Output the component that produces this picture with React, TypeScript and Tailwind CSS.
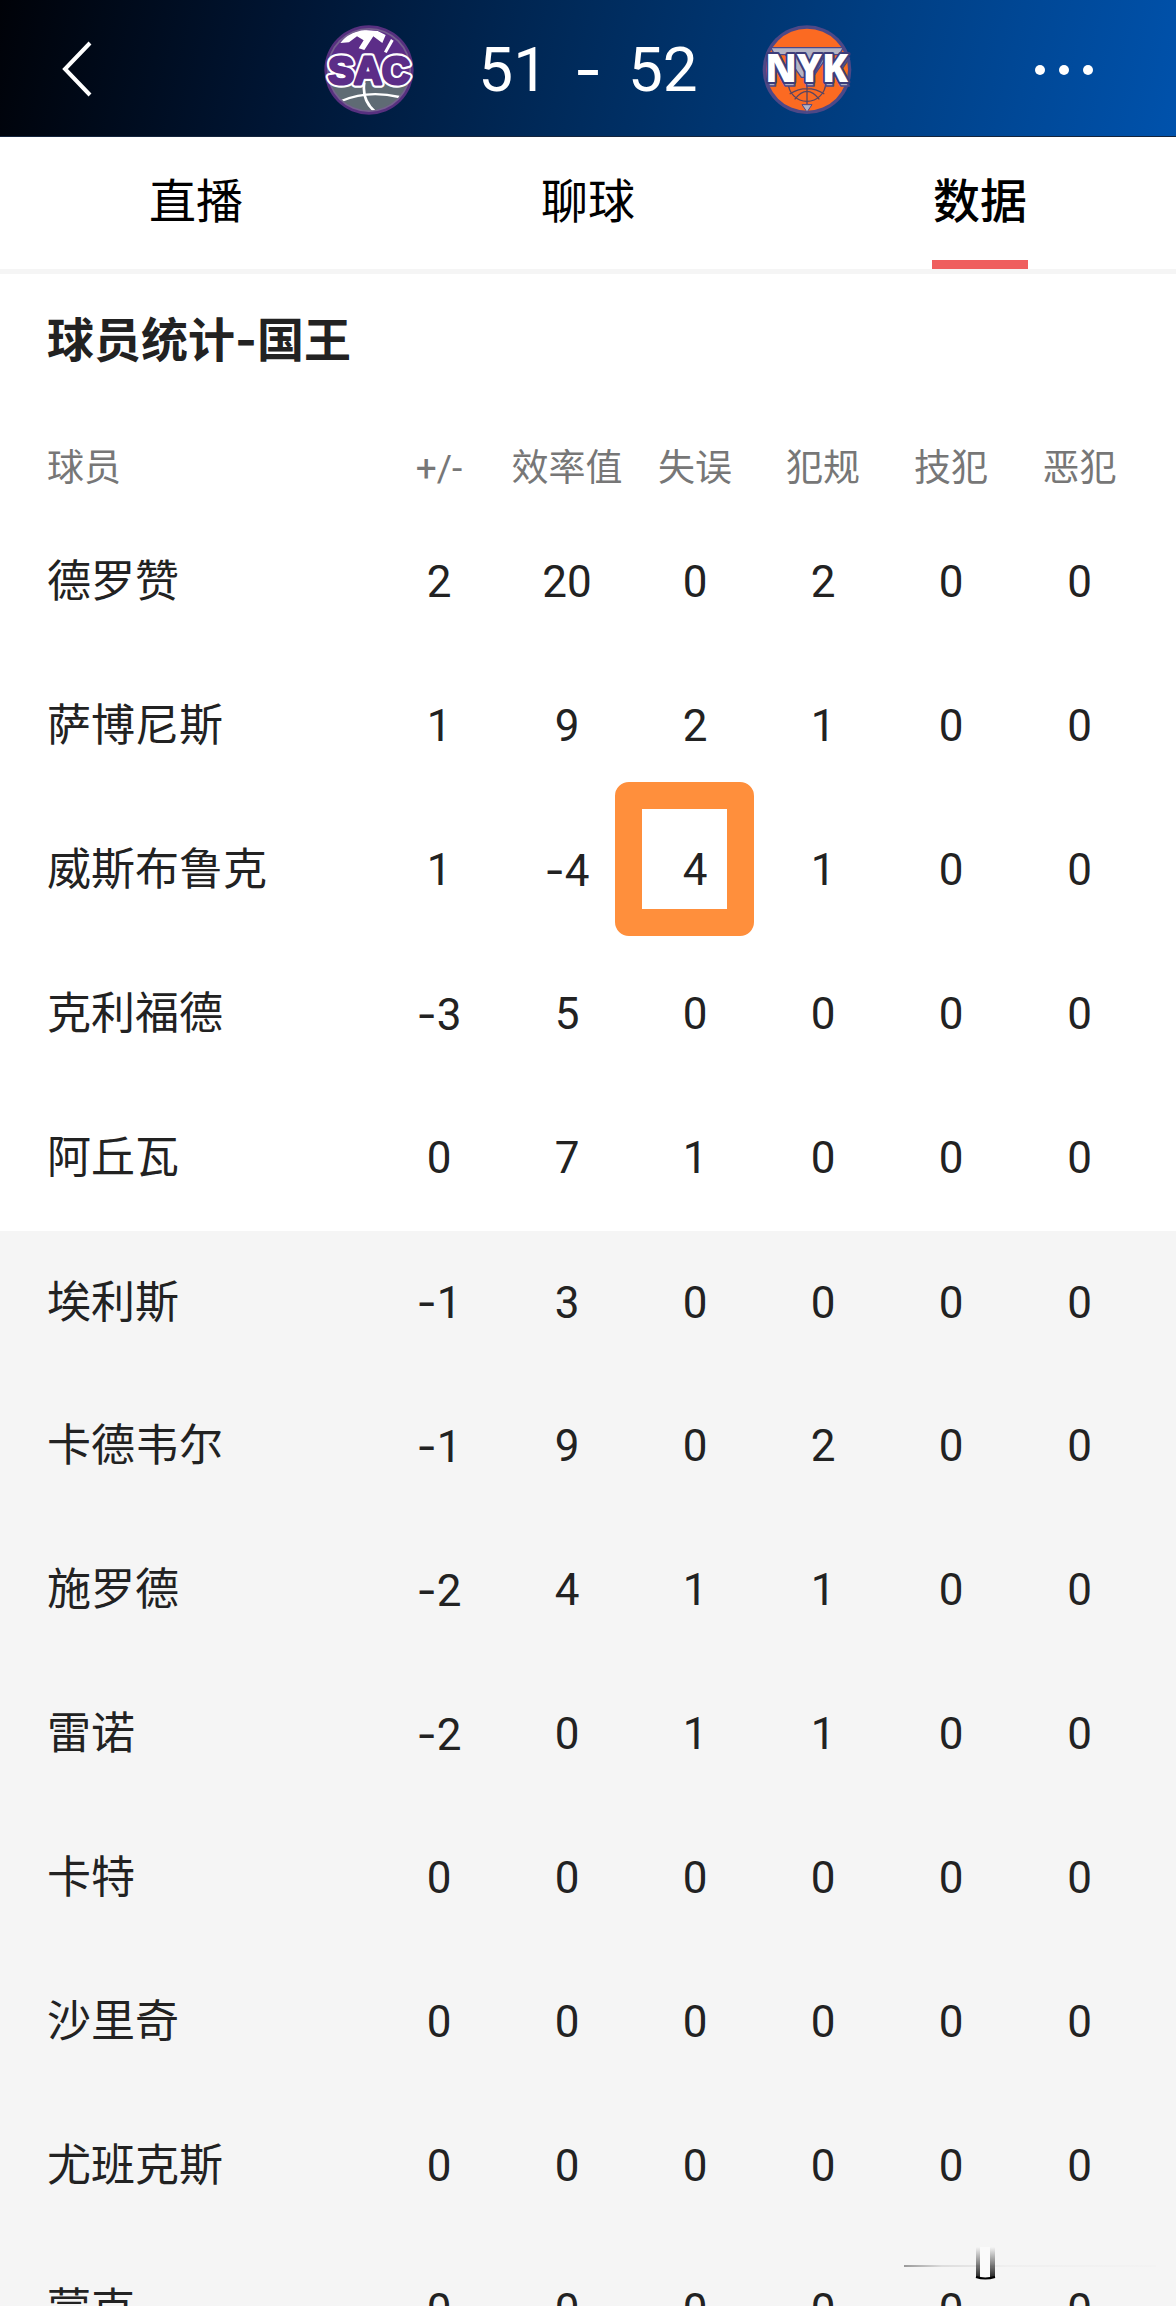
import React from "react";

interface PlayerRow {
  name: string;
  stats: number[];
}

const TABS = ["直播", "聊球", "数据"];
const COLUMNS = ["+/-", "效率值", "失误", "犯规", "技犯", "恶犯"];

const STARTERS: PlayerRow[] = [
  { name: "德罗赞", stats: [2, 20, 0, 2, 0, 0] },
  { name: "萨博尼斯", stats: [1, 9, 2, 1, 0, 0] },
  { name: "威斯布鲁克", stats: [1, -4, 4, 1, 0, 0] },
  { name: "克利福德", stats: [-3, 5, 0, 0, 0, 0] },
  { name: "阿丘瓦", stats: [0, 7, 1, 0, 0, 0] },
];

const BENCH: PlayerRow[] = [
  { name: "埃利斯", stats: [-1, 3, 0, 0, 0, 0] },
  { name: "卡德韦尔", stats: [-1, 9, 0, 2, 0, 0] },
  { name: "施罗德", stats: [-2, 4, 1, 1, 0, 0] },
  { name: "雷诺", stats: [-2, 0, 1, 1, 0, 0] },
  { name: "卡特", stats: [0, 0, 0, 0, 0, 0] },
  { name: "沙里奇", stats: [0, 0, 0, 0, 0, 0] },
  { name: "尤班克斯", stats: [0, 0, 0, 0, 0, 0] },
  { name: "蒙克", stats: [0, 0, 0, 0, 0, 0] },
];

const SacLogo: React.FC = () => (
  <svg viewBox="39 32 270 270" className="size-[90px] shrink-0" role="img" aria-label="SAC">
    <defs>
      <clipPath id="sac-ball">
        <circle cx="174" cy="167" r="121" />
      </clipPath>
    </defs>
    <circle cx="174" cy="167" r="134" fill="#57307f" />
    <circle cx="174" cy="167" r="126" fill="#75608f" />
    <g clipPath="url(#sac-ball)">
      <rect x="40" y="30" width="270" height="180" fill="#5c2d88" />
      <path d="M88 86L108 62L150 46L200 50L224 62L214 86L187 66L160 107L143 102L158 78L138 66L114 84Z" fill="#fff" />
      <path d="M240 74L248 79L227 116L219 112Z" fill="#fff" />
      <rect x="40" y="200" width="270" height="110" fill="#5f6b74" />
      <path d="M91 260Q170 226 265 248" fill="none" stroke="#fff" strokeWidth="7" />
      <path d="M160 205Q152 258 192 292" fill="none" stroke="#fff" strokeWidth="8" />
    </g>
    <g
      fontFamily="'Liberation Sans', Arial, sans-serif"
      fontWeight="700"
      fontSize="116"
      textAnchor="middle"
      strokeLinejoin="round"
    >
      <text x="174" y="209" fill="#fff" stroke="#fff" strokeWidth="22">SAC</text>
      <text x="174" y="209" fill="#5c2d88" stroke="#5c2d88" strokeWidth="9" aria-hidden="true">SAC</text>
    </g>
  </svg>
);

const NykLogo: React.FC = () => (
  <svg viewBox="52 33 270 270" className="size-[90px] shrink-0" role="img" aria-label="NYK">
    <circle cx="187" cy="167" r="133" fill="#4d4887" />
    <circle cx="187" cy="167" r="123" fill="#fb6a22" />
    <path d="M78 101H296L284 122H252L204 190H170L122 122H90Z" fill="#b3b4c4" stroke="#4d4887" strokeWidth="4" />
    <g fill="none" stroke="#5a4560" strokeWidth="4">
      <path d="M131 206A56 56 0 0 0 243 206M187 190V270M135 240Q187 208 239 240M150 256Q187 208 224 256" />
    </g>
    <path d="M172 272H202L187 294Z" fill="#b3b4c4" stroke="#4d4887" strokeWidth="3" />
    <g
      fontFamily="'Open Sans', 'Liberation Sans', sans-serif"
      fontWeight="800"
      fontSize="114"
      textAnchor="middle"
      strokeLinejoin="round"
    >
      <text x="188" y="216" fill="#b3b4c4" stroke="#4d4887" strokeWidth="5" aria-hidden="true">NYK</text>
      <text x="186" y="203" fill="#fff" stroke="#3d3d7a" strokeWidth="12" paintOrder="stroke">NYK</text>
    </g>
  </svg>
);

// Inter has a wider hyphen than Roboto, it reads better next to digits
const Dash: React.FC = () => <span className="font-[Inter,sans-serif]">-</span>;

const ScoreHeader: React.FC = () => (
  <header className="flex h-[137px] shrink-0 items-center border-b border-[#14243c] bg-[linear-gradient(103deg,#000208_0%,#001533_24%,#002a5a_48%,#003f84_74%,#0052ac_100%)] pt-1 text-white">
    <button type="button" aria-label="返回" className="w-40 shrink-0 pl-[60px]">
      <svg viewBox="0 0 32 60" className="h-[60px] w-8" fill="none" stroke="currentColor" strokeWidth="4">
        <path d="M30 3L5 29L30 55" />
      </svg>
    </button>

    <div className="flex flex-1 items-center justify-center gap-16">
      <SacLogo />
      <p className="flex text-[62px] leading-none">
        <span>51</span>
        <span className="w-20 text-center">
          <Dash />
        </span>
        <span>52</span>
      </p>
      <NykLogo />
    </div>

    <button type="button" aria-label="更多" className="flex w-40 shrink-0 items-center gap-3.5 pl-[19px]">
      <span className="size-2.5 rounded-full bg-white" />
      <span className="size-2.5 rounded-full bg-white" />
      <span className="size-2.5 rounded-full bg-white" />
    </button>
  </header>
);

const StatRow: React.FC<{ row: PlayerRow; marked?: number }> = ({ row, marked }) => (
  <tr className="h-36">
    <th scope="row" className="pl-[47px] text-left font-normal whitespace-nowrap">
      {row.name}
    </th>
    {row.stats.map((value, i) => (
      <td key={COLUMNS[i]} className="relative text-center last:pr-8">
        {value < 0 && <Dash />}
        {Math.abs(value)}
        {marked === i && (
          <span className="pointer-events-none absolute -top-4 -left-4 h-[154px] w-[139px] rounded-[14px] border-[27px] border-[#ff8f3c]" />
        )}
      </td>
    ))}
  </tr>
);

// Thin line and tube shape in the lower right corner
const CornerMark: React.FC = () => (
  <svg viewBox="0 0 252 36" className="pointer-events-none absolute right-5 bottom-6 h-9 w-[252px]" aria-hidden="true">
    <defs>
      <linearGradient id="mark-line">
        <stop offset="0" stopColor="#999" />
        <stop offset="0.15" stopColor="#ddd" />
        <stop offset="0.4" stopColor="#efefef" />
        <stop offset="1" stopColor="#f3f3f3" />
      </linearGradient>
      <linearGradient id="mark-wall" x2="0" y2="1">
        <stop offset="0" stopColor="#222" stopOpacity="0" />
        <stop offset="1" stopColor="#222" />
      </linearGradient>
    </defs>
    <rect y="19" width="252" height="2" fill="url(#mark-line)" />
    <rect x="72" y="1" width="19" height="31" fill="url(#mark-wall)" />
    <rect x="76" y="1" width="10" height="31" fill="#fafafa" />
    <path d="M72 31Q81 34 91 31" fill="none" stroke="#000" strokeWidth="2" />
  </svg>
);

export default function App() {
  return (
    <div className="relative flex h-screen flex-col overflow-hidden bg-white font-[Roboto,'Noto_Sans_CJK_SC',sans-serif] text-[#222]">
      <ScoreHeader />

      <nav role="tablist" className="flex h-[137px] shrink-0 border-b-[5px] border-[#f5f5f5] text-[47px] text-black">
        {TABS.map((tab) => {
          const active = tab === "数据";
          return (
            <button
              key={tab}
              type="button"
              role="tab"
              aria-selected={active}
              className={`relative flex-1 pb-0.5 ${active ? "font-medium" : ""}`}
            >
              {tab}
              {active && <span className="absolute bottom-0 left-1/2 h-[9px] w-24 -translate-x-1/2 bg-[#ef5f5f]" />}
            </button>
          );
        })}
      </nav>

      <main className="flex-1 overflow-y-auto [scrollbar-width:none]">
        <h2 className="px-[47px] pt-[34px] pb-[50px] text-[47px] leading-[64px] font-bold">
          球员统计
          <Dash />
          国王
        </h2>

        <table className="w-full table-fixed text-[44px] leading-[64px]">
          <colgroup>
            <col />
            <col className="w-32" />
            <col className="w-32" />
            <col className="w-32" />
            <col className="w-32" />
            <col className="w-32" />
            <col className="w-[161px]" />
          </colgroup>
          <thead className="text-[37px] text-[#777]">
            <tr className="h-[87px]">
              <th scope="col" className="pt-1 pl-[47px] text-left font-normal">
                球员
              </th>
              {COLUMNS.map((label) => (
                <th key={label} scope="col" className="pt-1 text-center font-normal whitespace-nowrap last:pr-8">
                  {label}
                </th>
              ))}
            </tr>
          </thead>
          <tbody className="border-b-2 border-white">
            {STARTERS.map((row) => (
              <StatRow key={row.name} row={row} marked={row.name === "威斯布鲁克" ? 2 : undefined} />
            ))}
          </tbody>
          <tbody className="bg-[#f5f5f5]">
            {BENCH.map((row) => (
              <StatRow key={row.name} row={row} />
            ))}
          </tbody>
        </table>
      </main>

      <CornerMark />
    </div>
  );
}
